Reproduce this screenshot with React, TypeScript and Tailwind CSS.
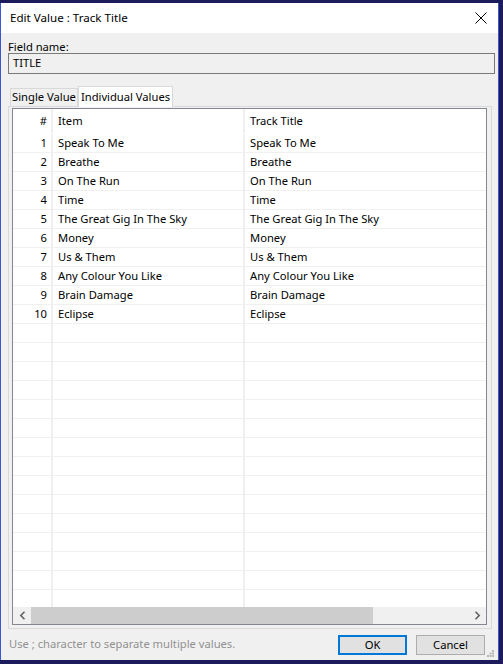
import React from 'react';

const tracks = [
  'Speak To Me',
  'Breathe',
  'On The Run',
  'Time',
  'The Great Gig In The Sky',
  'Money',
  'Us & Them',
  'Any Colour You Like',
  'Brain Damage',
  'Eclipse',
];

const emptyRows = Array.from({ length: 16 });

const ui = { fontFamily: '"Noto Sans", "Open Sans", sans-serif' };

const Row: React.FC<{ n?: number; a?: string; b?: string }> = ({ n, a, b }) => (
  <div className="flex h-[19px] shrink-0 border-b border-[#f0f0f0] leading-[18px]">
    <div className="w-[38px] shrink-0 pr-[4px] text-right">{n}</div>
    <div className="w-[2px] shrink-0 bg-[#f0f0f0]" />
    <div className="w-[190px] shrink-0 pl-[5px] whitespace-nowrap">{a}</div>
    <div className="w-[2px] shrink-0 bg-[#f0f0f0]" />
    <div className="flex-1 pl-[5px] whitespace-nowrap">{b}</div>
  </div>
);

export default function App() {
  return (
    <div className="w-[503px] h-[664px] bg-[#1c1c5c] pt-[3px] pr-[4px] pb-[4px] overflow-hidden">
      <div
        className="h-full flex flex-col bg-[#f0f0f0] border-x border-[#3a57d0] text-[11.2px] text-black"
        style={ui}
      >
        {/* title bar */}
        <div className="h-[30px] shrink-0 bg-white flex items-center justify-between pl-[9px] pr-[10px]">
          <span className="text-[11.6px]">Edit Value : Track Title</span>
          <svg width="12" height="12" viewBox="0 0 12 12" className="mr-[1px]">
            <path d="M0.5 0.5 L11.5 11.5 M11.5 0.5 L0.5 11.5" stroke="#000" strokeWidth="1" />
          </svg>
        </div>

        <div className="flex-1 flex flex-col pl-[7px] pr-[4px] pt-[8px]">
          <div className="leading-[12px]">Field name:</div>
          <div className="h-[21px] -mr-[1px] border border-[#7a7a7a] bg-[#f0f0f0] flex items-center pl-[4px]">
            TITLE
          </div>

          {/* tabs */}
          <div className="mt-[11px] flex items-end h-[21px] pl-[2px]">
            <div className="h-[18px] w-[68px] border border-b-0 border-[#d9d9d9] bg-[#f0f0f0] flex items-center justify-center">
              Single Value
            </div>
            <div className="h-[21px] w-[95px] border border-b-0 border-[#d9d9d9] bg-white flex items-center justify-center -mb-px relative">
              Individual Values
            </div>
          </div>

          {/* tab panel */}
          <div className="h-[523px] mr-[2px] border border-[#d9d9d9] bg-[#f0f0f0] pl-[3px] pr-[4px] pt-[1px] pb-[3px] flex">
            <div className="flex-1 border border-[#828790] bg-white flex flex-col overflow-hidden">
              <div className="flex-1 flex flex-col overflow-hidden">
                <div className="flex h-[25px] shrink-0 items-center leading-[18px] pb-[1px]">
                  <div className="w-[38px] shrink-0 pr-[4px] text-right">#</div>
                  <div className="w-[2px] h-full shrink-0 bg-[#f0f0f0]" />
                  <div className="w-[190px] shrink-0 pl-[5px]">Item</div>
                  <div className="w-[2px] h-full shrink-0 bg-[#f0f0f0]" />
                  <div className="flex-1 pl-[5px]">Track Title</div>
                </div>
                {tracks.map((t, i) => (
                  <Row key={t} n={i + 1} a={t} b={t} />
                ))}
                {emptyRows.map((_, i) => (
                  <Row key={i} />
                ))}
              </div>
              {/* horizontal scrollbar */}
              <div className="h-[17px] shrink-0 bg-[#f0f0f0] flex items-center">
                <div className="w-[18px] flex justify-center">
                  <svg width="7" height="9" viewBox="0 0 7 9">
                    <path d="M5.5 0.8 L1.8 4.5 L5.5 8.2" stroke="#606060" strokeWidth="1.6" fill="none" />
                  </svg>
                </div>
                <div className="w-[342px] h-full bg-[#cdcdcd]" />
                <div className="flex-1" />
                <div className="w-[18px] flex justify-center">
                  <svg width="7" height="9" viewBox="0 0 7 9">
                    <path d="M1.5 0.8 L5.2 4.5 L1.5 8.2" stroke="#606060" strokeWidth="1.6" fill="none" />
                  </svg>
                </div>
              </div>
            </div>
          </div>

          {/* footer */}
          <div className="flex-1 flex items-center pl-[1px]">
            <span className="text-[#909090] flex-1">Use ; character to separate multiple values.</span>
            <button className="w-[69px] h-[20px] border-2 border-[#0078d7] bg-[#e1e1e1] leading-none">
              OK
            </button>
            <button className="ml-[9px] w-[69px] h-[20px] border border-[#adadad] bg-[#e1e1e1] leading-none">
              Cancel
            </button>
            <div className="w-[9px] self-end mb-[3px] flex justify-end">
              <svg width="7" height="7" viewBox="0 0 7 7">
                <rect x="5" y="0" width="2" height="2" fill="#b8b8b8" />
                <rect x="2.5" y="2.5" width="2" height="2" fill="#b8b8b8" />
                <rect x="5" y="2.5" width="2" height="2" fill="#b8b8b8" />
                <rect x="0" y="5" width="2" height="2" fill="#b8b8b8" />
                <rect x="2.5" y="5" width="2" height="2" fill="#b8b8b8" />
                <rect x="5" y="5" width="2" height="2" fill="#b8b8b8" />
              </svg>
            </div>
          </div>
        </div>
      </div>
    </div>
  );
}
